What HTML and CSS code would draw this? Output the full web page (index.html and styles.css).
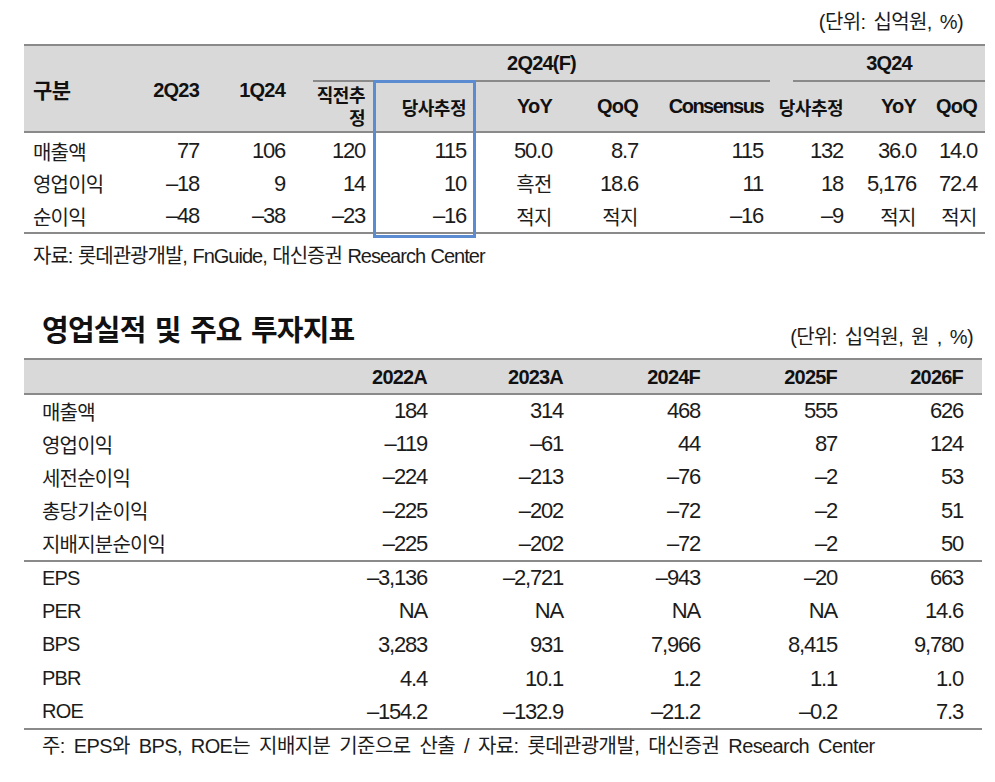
FILE: index.html
```html
<!DOCTYPE html>
<html lang="ko">
<head>
<meta charset="utf-8">
<link rel="stylesheet" href="styles.css">
</head>
<body>
<div class="page">
  <div class="unit unit1">(단위: 십억원, %)</div>
  <div class="tblwrap">
    <table class="t1">
      <colgroup>
        <col class="w116"><col class="w67"><col class="w86"><col class="w80"><col class="w101"><col class="w86"><col class="w86"><col class="w125"><col class="w80"><col class="w73"><col class="w61">
      </colgroup>
      <thead>
        <tr class="h1">
          <th rowspan="2" class="lab">구분</th>
          <th rowspan="2" class="mid">2Q23</th>
          <th rowspan="2" class="mid">1Q24</th>
          <th colspan="5" class="grp"><div class="gline g1">2Q24(F)</div></th>
          <th colspan="3" class="grp"><div class="gline g2">3Q24</div></th>
        </tr>
        <tr class="h2">
          <th class="two k">직전추<br>정</th>
          <th class="k">당사추정</th>
          <th>YoY</th>
          <th>QoQ</th>
          <th class="cons">Consensus</th>
          <th class="k">당사추정</th>
          <th>YoY</th>
          <th>QoQ</th>
        </tr>
      </thead>
      <tbody>
        <tr><td class="lab">매출액</td><td>77</td><td>106</td><td>120</td><td>115</td><td>50.0</td><td>8.7</td><td>115</td><td>132</td><td>36.0</td><td>14.0</td></tr>
        <tr><td class="lab">영업이익</td><td>–18</td><td>9</td><td>14</td><td>10</td><td class="k">흑전</td><td>18.6</td><td>11</td><td>18</td><td>5,176</td><td>72.4</td></tr>
        <tr><td class="lab">순이익</td><td>–48</td><td>–38</td><td>–23</td><td>–16</td><td class="k">적지</td><td class="k">적지</td><td>–16</td><td>–9</td><td class="k">적지</td><td class="k">적지</td></tr>
      </tbody>
    </table>
    <div class="hl"></div>
  </div>
  <div class="src src1">자료: 롯데관광개발, FnGuide, 대신증권 Research Center</div>

  <div class="titlerow">
    <h2 class="title">영업실적 및 주요 투자지표</h2>
    <div class="unit unit2">(단위: 십억원, 원 , %)</div>
  </div>
  <table class="t2">
    <colgroup>
      <col class="w286"><col class="w136"><col class="w136"><col class="w137"><col class="w137"><col class="w126">
    </colgroup>
    <thead>
      <tr><th></th><th>2022A</th><th>2023A</th><th>2024F</th><th>2025F</th><th>2026F</th></tr>
    </thead>
    <tbody class="g1r">
      <tr><td class="lab">매출액</td><td>184</td><td>314</td><td>468</td><td>555</td><td>626</td></tr>
      <tr><td class="lab">영업이익</td><td>–119</td><td>–61</td><td>44</td><td>87</td><td>124</td></tr>
      <tr><td class="lab">세전순이익</td><td>–224</td><td>–213</td><td>–76</td><td>–2</td><td>53</td></tr>
      <tr><td class="lab">총당기순이익</td><td>–225</td><td>–202</td><td>–72</td><td>–2</td><td>51</td></tr>
      <tr><td class="lab">지배지분순이익</td><td>–225</td><td>–202</td><td>–72</td><td>–2</td><td>50</td></tr>
    </tbody>
    <tbody class="g2r">
      <tr><td class="lab">EPS</td><td>–3,136</td><td>–2,721</td><td>–943</td><td>–20</td><td>663</td></tr>
      <tr><td class="lab">PER</td><td>NA</td><td>NA</td><td>NA</td><td>NA</td><td>14.6</td></tr>
      <tr><td class="lab">BPS</td><td>3,283</td><td>931</td><td>7,966</td><td>8,415</td><td>9,780</td></tr>
      <tr><td class="lab">PBR</td><td>4.4</td><td>10.1</td><td>1.2</td><td>1.1</td><td>1.0</td></tr>
      <tr><td class="lab">ROE</td><td>–154.2</td><td>–132.9</td><td>–21.2</td><td>–0.2</td><td>7.3</td></tr>
    </tbody>
  </table>
  <div class="src src2">주: EPS와 BPS, ROE는 지배지분 기준으로 산출 / 자료: 롯데관광개발, 대신증권 Research Center</div>
</div>
</body>
</html>
```

FILE: styles.css
```css
html, body {
  margin: 0;
  padding: 0;
  background: #ffffff;
}
body {
  font-family: "Liberation Sans", "Noto Sans CJK KR", sans-serif;
  color: #1c1c1c;
  font-size: 20px;
  letter-spacing: -0.6px;
}
.page {
  width: 995px;
  height: 782px;
  overflow: hidden;
}
.unit {
  text-align: right;
  white-space: nowrap;
  word-spacing: 3px;
}
.unit1 {
  height: 44px;
  line-height: 44px;
  padding-right: 32px;
}
.tblwrap {
  position: relative;
  margin-left: 24px;
  width: 961px;
}
table {
  border-collapse: collapse;
  table-layout: fixed;
}
.t1 { width: 961px; }
.t2 { width: 958px; margin-left: 24px; }

.w116 { width: 116px; } .w67 { width: 67px; } .w86 { width: 86px; } .w80 { width: 80px; }
.w101 { width: 101px; } .w125 { width: 125px; } .w73 { width: 73px; } .w61 { width: 61px; }
.w286 { width: 286px; } .w136 { width: 136px; } .w137 { width: 137px; } .w126 { width: 126px; }

th, td {
  padding: 0 8px 0 0;
  text-align: right;
  white-space: nowrap;
}
td {
  font-size: 22px;
  letter-spacing: -1.2px;
}
td.lab {
  font-size: 20px;
  letter-spacing: -0.8px;
}
td.k {
  font-size: 20px;
  letter-spacing: -0.5px;
}
thead {
  background: #d9d9d9;
  border-top: 2px solid #8a8a8a;
  border-bottom: 2px solid #8a8a8a;
}
th {
  font-weight: bold;
  font-size: 20px;
  letter-spacing: -0.8px;
  color: #111;
}
th.k {
  font-size: 18px;
  letter-spacing: -0.5px;
}
th.cons {
  letter-spacing: -1.5px;
}
.t1 th.lab, .t1 td.lab {
  text-align: left;
  padding-left: 9px;
}
.t1 th.lab { font-size: 21px; letter-spacing: -0.5px; }
.t1 .h1 { height: 36px; }
.t1 .h2 { height: 49px; }
.t1 th.mid { padding-top: 4px; }
.t1 th.grp {
  padding: 0;
  text-align: center;
  vertical-align: top;
}
.gline {
  height: 34px;
  line-height: 34px;
  border-bottom: 2px solid #8a8a8a;
}
.g1 { margin-left: 20px; margin-right: 1px; }
.g2 { margin-left: 22px; }
.t1 th.two {
  line-height: 23px;
  padding-top: 3px;
}
.t1 tbody tr { height: 33px; }
.t1 tbody tr:first-child { height: 35px; }
.t1 tbody tr:first-child td { padding-top: 2px; }
.t1 tbody { border-bottom: 2px solid #8a8a8a; }
.hl {
  position: absolute;
  left: 349px;
  top: 36px;
  width: 103px;
  height: 158px;
  box-sizing: border-box;
  border: 3px solid #5b8bd0;
}
.src {
  line-height: 30px;
  white-space: nowrap;
}
.src1 {
  margin-top: 7px;
  padding-left: 33px;
  letter-spacing: -1px;
  word-spacing: 1px;
}
.titlerow {
  display: flex;
  justify-content: space-between;
  align-items: center;
  height: 34px;
  margin-top: 43px;
  margin-bottom: 10px;
}
.title {
  margin: 0;
  padding-left: 42px;
  font-size: 29px;
  font-weight: bold;
  letter-spacing: -0.8px;
  word-spacing: 2px;
  line-height: 34px;
  color: #111;
}
.unit2 {
  padding-right: 22px;
  padding-top: 8px;
}
.t2 th, .t2 td { padding-right: 19px; }
.t2 thead tr { height: 35px; }
.t2 th { padding-top: 2px; }
.t2 td.lab {
  text-align: left;
  padding-left: 18px;
}
.t2 .g1r tr { height: 33.4px; }
.t2 .g2r {
  border-top: 2px solid #8a8a8a;
  border-bottom: 2px solid #8a8a8a;
}
.t2 .g2r tr { height: 33.6px; }
.src2 {
  margin-top: 1px;
  padding-left: 42px;
  word-spacing: 4px;
}
```
